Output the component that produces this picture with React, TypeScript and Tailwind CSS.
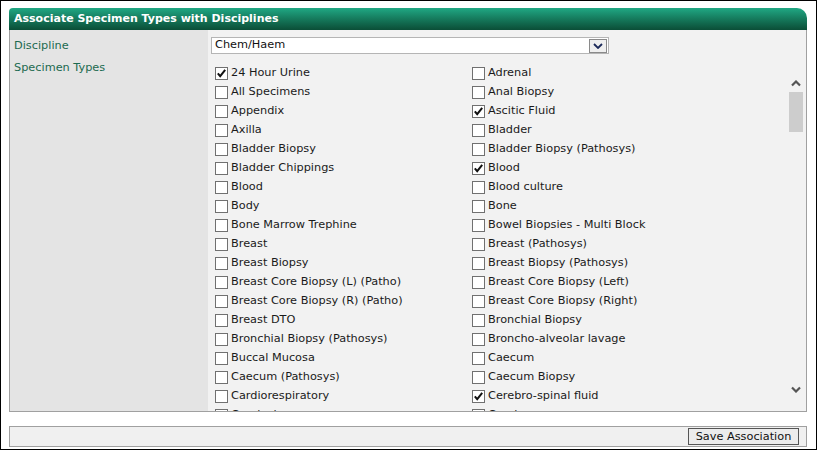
import React from "react";

const rows: [string, boolean, string, boolean][] = [
  ["24 Hour Urine", true, "Adrenal", false],
  ["All Specimens", false, "Anal Biopsy", false],
  ["Appendix", false, "Ascitic Fluid", true],
  ["Axilla", false, "Bladder", false],
  ["Bladder Biopsy", false, "Bladder Biopsy (Pathosys)", false],
  ["Bladder Chippings", false, "Blood", true],
  ["Blood", false, "Blood culture", false],
  ["Body", false, "Bone", false],
  ["Bone Marrow Trephine", false, "Bowel Biopsies - Multi Block", false],
  ["Breast", false, "Breast (Pathosys)", false],
  ["Breast Biopsy", false, "Breast Biopsy (Pathosys)", false],
  ["Breast Core Biopsy (L) (Patho)", false, "Breast Core Biopsy (Left)", false],
  ["Breast Core Biopsy (R) (Patho)", false, "Breast Core Biopsy (Right)", false],
  ["Breast DTO", false, "Bronchial Biopsy", false],
  ["Bronchial Biopsy (Pathosys)", false, "Broncho-alveolar lavage", false],
  ["Buccal Mucosa", false, "Caecum", false],
  ["Caecum (Pathosys)", false, "Caecum Biopsy", false],
  ["Cardiorespiratory", false, "Cerebro-spinal fluid", true],
  ["Cervical", false, "Cervix", false],
];

function Check({ label, checked }: { label: string; checked: boolean }) {
  return (
    <div className="flex h-[19px] items-center">
      <span className="relative mr-[3px] h-[13px] w-[13px] shrink-0 border border-[#707070] bg-white">
        {checked && (
          <svg viewBox="0 0 13 13" className="absolute -left-px -top-px h-[13px] w-[13px]">
            <path d="M2.8 6.3 L5.2 9.2 L10.2 2.8" fill="none" stroke="#111" strokeWidth="2" />
          </svg>
        )}
      </span>
      <span className="whitespace-nowrap text-[#1a1a1a]">{label}</span>
    </div>
  );
}

export default function App() {
  return (
    <div
      className="h-[450px] w-[817px] overflow-hidden border border-black bg-white pl-[8px] pr-[9px] pt-[7px] text-[11.3px]"
      style={{ fontFamily: '"DejaVu Sans", Verdana, sans-serif' }}
    >
      <div className="flex h-[22px] items-center rounded-tl-[4px] rounded-tr-[10px] bg-gradient-to-b from-[#20a884] to-[#0b4e37] pl-[5px] text-[11px] font-bold text-white">
        Associate Specimen Types with Disciplines
      </div>
      <div className="flex h-[382px] border border-t-0 border-[#a0a0a0]">
        <div className="w-[198px] shrink-0 bg-[#e4e4e4] pl-[4px] pt-[8px] text-[#1b6a50]">
          <div className="h-[22px]">Discipline</div>
          <div className="h-[19px]">Specimen Types</div>
        </div>
        <div className="flex min-w-0 flex-1 flex-col bg-[#f2f2f2]">
          <div className="flex h-[29px] shrink-0 items-start pl-[3px] pt-[7px]">
            <div className="flex h-[17px] w-[398px] items-center justify-between border border-[#b5b5b5] bg-white pl-[3px] pr-px text-[#111]">
              <span>Chem/Haem</span>
              <span className="flex h-[14px] w-[18px] items-center justify-center border border-[#8a8a8a] bg-[#efefef]">
                <svg viewBox="0 0 10 6" className="h-[6px] w-[10px]">
                  <path d="M1 1 L5 5 L9 1" fill="none" stroke="#1c2a5a" strokeWidth="1.8" />
                </svg>
              </span>
            </div>
          </div>
          <div className="flex min-h-0 flex-1">
            <div className="grid flex-1 grid-cols-[257px_1fr] content-start overflow-hidden pl-[7px] pt-[5px]">
              {rows.map(([a, ac, b, bc], i) => (
                <React.Fragment key={i}>
                  <Check label={a} checked={ac} />
                  <Check label={b} checked={bc} />
                </React.Fragment>
              ))}
            </div>
            <div className="flex w-[18px] shrink-0 flex-col items-center pr-[2px] pt-[21px]">
              <svg viewBox="0 0 10 7" className="h-[7px] w-[10px]">
                <path d="M1 5.5 L5 1.5 L9 5.5" fill="none" stroke="#555" strokeWidth="2.2" />
              </svg>
              <div className="mt-[5px] h-[40px] w-[14px] bg-[#cdcdcd]" />
              <div className="flex-1" />
              <svg viewBox="0 0 10 7" className="mb-[18px] h-[7px] w-[10px]">
                <path d="M1 1.5 L5 5.5 L9 1.5" fill="none" stroke="#555" strokeWidth="2.2" />
              </svg>
            </div>
          </div>
        </div>
      </div>
      <div className="mt-[14px] flex h-[21px] items-center justify-end border border-[#a0a0a0] bg-[#f0f0f0] pr-[7px]">
        <button className="h-[17px] w-[111px] border border-[#555] bg-[#ececec] text-[11.3px] leading-none text-[#111]">
          Save Association
        </button>
      </div>
    </div>
  );
}
